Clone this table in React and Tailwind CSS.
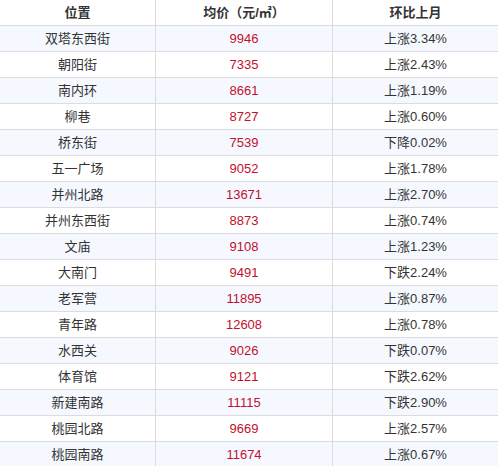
import React from 'react'

const rows = [
  ['双塔东西街', '9946', '上涨3.34%'],
  ['朝阳街', '7335', '上涨2.43%'],
  ['南内环', '8661', '上涨1.19%'],
  ['柳巷', '8727', '上涨0.60%'],
  ['桥东街', '7539', '下降0.02%'],
  ['五一广场', '9052', '上涨1.78%'],
  ['并州北路', '13671', '上涨2.70%'],
  ['并州东西街', '8873', '上涨0.74%'],
  ['文庙', '9108', '上涨1.23%'],
  ['大南门', '9491', '下跌2.24%'],
  ['老军营', '11895', '上涨0.87%'],
  ['青年路', '12608', '上涨0.78%'],
  ['水西关', '9026', '下跌0.07%'],
  ['体育馆', '9121', '下跌2.62%'],
  ['新建南路', '11115', '下跌2.90%'],
  ['桃园北路', '9669', '上涨2.57%'],
  ['桃园南路', '11674', '上涨0.67%'],
]

const App = () => {
  return (
    <div className="w-[498px] h-[466px] overflow-hidden bg-white text-[13px] text-[#333] font-['Liberation_Sans','Noto_Sans_CJK_SC',sans-serif]">
      {/* Header */}
      <div className="grid grid-cols-[156px_177px_1fr] h-[26px] border-b border-[#dcdcdc] font-bold">
        <div className="flex items-center justify-center border-r border-[#dcdcdc]">位置</div>
        <div className="flex items-center justify-center border-r border-[#dcdcdc]">均价（元/㎡）</div>
        <div className="flex items-center justify-center">环比上月</div>
      </div>

      {rows.map((row, i) => (
        <div
          key={row[0]}
          className={`grid grid-cols-[156px_177px_1fr] h-[26px] border-b border-[#dcdcdc] ${i % 2 === 0 ? 'bg-[#f5f9ff]' : 'bg-white'}`}
        >
          <div className="flex items-center justify-center border-r border-[#dcdcdc]">{row[0]}</div>
          <div className="flex items-center justify-center border-r border-[#dcdcdc] text-[#c3102c]">{row[1]}</div>
          <div className="flex items-center justify-center">{row[2]}</div>
        </div>
      ))}
    </div>
  )
}

export default App
